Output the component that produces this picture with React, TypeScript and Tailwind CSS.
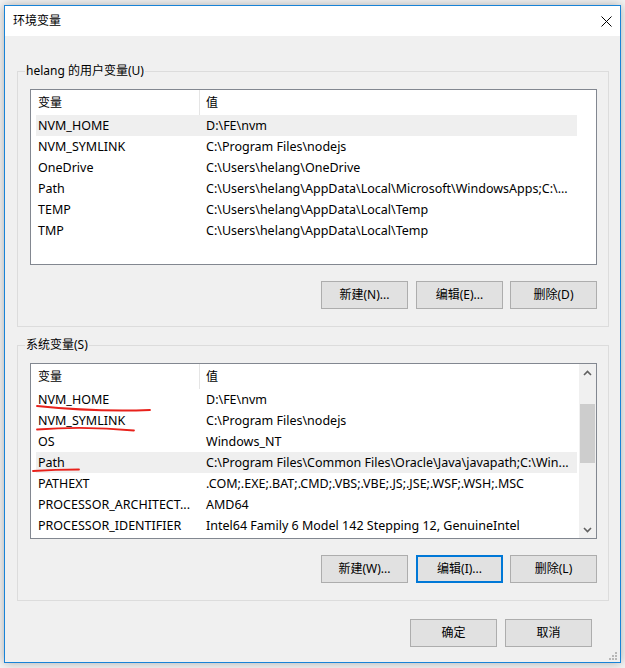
import React from "react";

type Row = { name: string; value: string; selected?: boolean };

const userVars: Row[] = [
    { name: "NVM_HOME", value: "D:\\FE\\nvm", selected: true },
    { name: "NVM_SYMLINK", value: "C:\\Program Files\\nodejs" },
    { name: "OneDrive", value: "C:\\Users\\helang\\OneDrive" },
    { name: "Path", value: "C:\\Users\\helang\\AppData\\Local\\Microsoft\\WindowsApps;C:\\..." },
    { name: "TEMP", value: "C:\\Users\\helang\\AppData\\Local\\Temp" },
    { name: "TMP", value: "C:\\Users\\helang\\AppData\\Local\\Temp" },
];

const systemVars: Row[] = [
    { name: "NVM_HOME", value: "D:\\FE\\nvm" },
    { name: "NVM_SYMLINK", value: "C:\\Program Files\\nodejs" },
    { name: "OS", value: "Windows_NT" },
    { name: "Path", value: "C:\\Program Files\\Common Files\\Oracle\\Java\\javapath;C:\\Win...", selected: true },
    { name: "PATHEXT", value: ".COM;.EXE;.BAT;.CMD;.VBS;.VBE;.JS;.JSE;.WSF;.WSH;.MSC" },
    { name: "PROCESSOR_ARCHITECT...", value: "AMD64" },
    { name: "PROCESSOR_IDENTIFIER", value: "Intel64 Family 6 Model 142 Stepping 12, GenuineIntel" },
];

function Button({ label, focused, className }: { label: string; focused?: boolean; className?: string }) {
    return (
        <div
            className={`h-[28px] w-[87px] flex items-center justify-center bg-[#e1e1e1] text-[12px] text-black ${
                focused ? "border-2 border-[#0078d7]" : "border border-[#adadad]"
            } ${className ?? ""}`}>
            {label}
        </div>
    );
}

function VarRows({ rows }: { rows: Row[] }) {
    return (
        <>
            <div className="flex h-[25px] ml-[5px] w-[541px] items-center">
                <div className="w-[164px] h-full pl-[2px] flex items-center border-r border-[#e5e5e5]">变量</div>
                <div className="pl-[6px]">值</div>
            </div>
            {rows.map((row) => (
                <div
                    key={row.name}
                    className={`flex h-[21px] ml-[5px] w-[541px] items-center pt-[2px] text-[12.5px] ${row.selected ? "bg-[#efefef]" : ""}`}>
                    <div className="w-[164px] pl-[2px] whitespace-nowrap overflow-hidden">{row.name}</div>
                    <div className="flex-1 pl-[6px] whitespace-nowrap overflow-hidden">{row.value}</div>
                </div>
            ))}
        </>
    );
}

function Chevron({ up }: { up?: boolean }) {
    return (
        <svg width="9" height="6" viewBox="0 0 9 6">
            <polyline
                points={up ? "1,5 4.5,1.5 8,5" : "1,1 4.5,4.5 8,1"}
                fill="none"
                stroke="#606060"
                strokeWidth="1.6"
            />
        </svg>
    );
}

function Group({ legend, children }: { legend: string; children: React.ReactNode }) {
    return (
        <div className="relative h-[256px] border border-[#dcdcdc]">
            <span className="absolute top-[-9px] left-[7px] px-[1px] bg-[#f0f0f0] text-[12px] leading-[16px]">
                {legend}
            </span>
            {children}
        </div>
    );
}

export default function App() {
    return (
        <div
            className="relative w-[625px] h-[668px] bg-[#f4f4f4] overflow-hidden text-[12px] text-black"
            style={{ fontFamily: '"Noto Sans", "Noto Sans CJK SC", sans-serif' }}>
            <div className="relative ml-[4px] mt-[5px] w-[617px] h-[658px] border border-[#1883d7] bg-[#f0f0f0] flex flex-col shadow-[0_0_10px_rgba(0,0,0,0.3)]">
                {/* title bar */}
                <div className="h-[30px] bg-white flex items-center justify-between pl-[8px] pr-[8px]">
                    <span className="text-[12px]">环境变量</span>
                    <svg width="11" height="11" viewBox="0 0 11 11">
                        <path d="M0.5 0.5 L10.5 10.5 M10.5 0.5 L0.5 10.5" stroke="#000" strokeWidth="1" />
                    </svg>
                </div>

                <div className="pt-[35px] pl-[12px] pr-[11px]">
                    <Group legend="helang 的用户变量(U)">
                        <div className="ml-[12px] mt-[17px] w-[567px] h-[176px] border border-[#828790] bg-white overflow-hidden">
                            <VarRows rows={userVars} />
                        </div>
                        <div className="flex ml-[303px] mt-[16px]">
                            <Button label="新建(N)..." />
                            <Button label="编辑(E)..." className="ml-[8px]" />
                            <Button label="删除(D)" className="ml-[7px]" />
                        </div>
                    </Group>

                    <div className="mt-[18px]">
                        <Group legend="系统变量(S)">
                            <div className="ml-[12px] mt-[17px] w-[567px] h-[176px] border border-[#828790] bg-white flex overflow-hidden">
                                <div className="w-[548px] overflow-hidden">
                                    <VarRows rows={systemVars} />
                                </div>
                                <div className="w-[17px] h-full bg-[#f0f0f0] flex flex-col items-center">
                                    <div className="h-[17px] w-full flex items-center justify-center">
                                        <Chevron up />
                                    </div>
                                    <div className="mt-[23px] h-[59px] w-[15px] bg-[#cdcdcd]" />
                                    <div className="flex-1" />
                                    <div className="h-[17px] w-full flex items-center justify-center">
                                        <Chevron />
                                    </div>
                                </div>
                            </div>
                            <div className="flex ml-[303px] mt-[16px]">
                                <Button label="新建(W)..." />
                                <Button label="编辑(I)..." focused className="ml-[8px]" />
                                <Button label="删除(L)" className="ml-[7px]" />
                            </div>
                        </Group>
                    </div>

                    <div className="flex justify-end pr-[17px] mt-[18px]">
                        <Button label="确定" />
                        <Button label="取消" className="ml-[8px]" />
                    </div>
                </div>

                {/* size grip */}
                <svg className="absolute right-[2px] bottom-[1px]" width="9" height="9" viewBox="0 0 9 9">
                    <rect x="6" y="0" width="2" height="2" fill="#b8b8b8" />
                    <rect x="3" y="3" width="2" height="2" fill="#b8b8b8" />
                    <rect x="6" y="3" width="2" height="2" fill="#b8b8b8" />
                    <rect x="0" y="6" width="2" height="2" fill="#b8b8b8" />
                    <rect x="3" y="6" width="2" height="2" fill="#b8b8b8" />
                    <rect x="6" y="6" width="2" height="2" fill="#b8b8b8" />
                </svg>
            </div>

            {/* red pen marks over the system list */}
            <svg className="absolute inset-0 pointer-events-none" width="625" height="668">
                <path d="M37 406 Q 95 412 150 410" fill="none" stroke="#e8211b" strokeWidth="1.8" strokeLinecap="round" />
                <path d="M37 429.5 Q 85 426 134 430.5" fill="none" stroke="#e8211b" strokeWidth="1.8" strokeLinecap="round" />
                <path d="M33 471 Q 55 469.5 79 469.5" fill="none" stroke="#e8211b" strokeWidth="1.8" strokeLinecap="round" />
            </svg>
        </div>
    );
}
